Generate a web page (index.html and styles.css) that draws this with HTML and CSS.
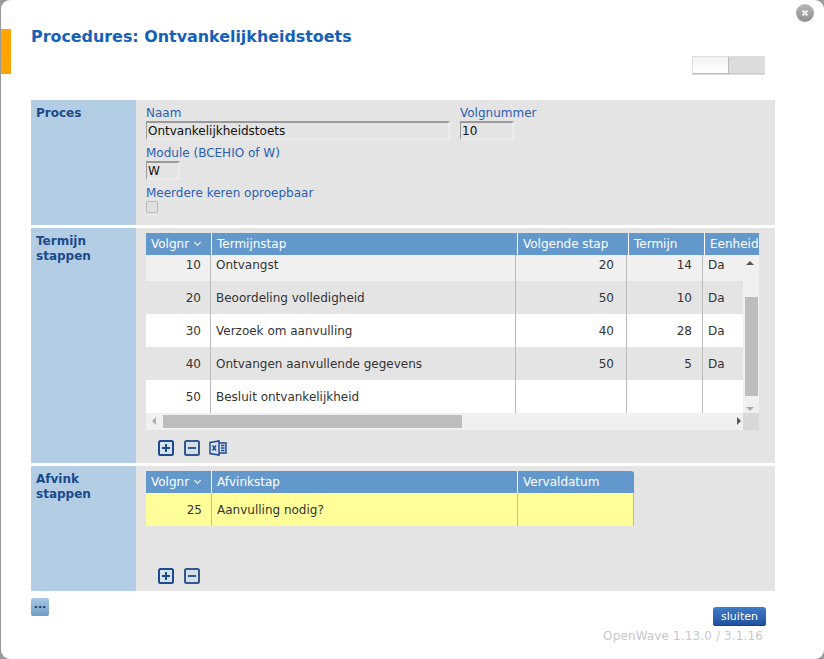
FILE: index.html
```html
<!DOCTYPE html>
<html lang="en">
<head>
	<meta charset="UTF-8">
	<title>Procedures: Ontvankelijkheidstoets</title>
	<link rel="stylesheet" href="styles.css">
</head>
<body>
	<div class="dialog">
		<span class="marker"></span>
		<svg class="close" width="18" height="18" viewBox="0 0 18 18">
			<defs>
				<linearGradient id="closeFill" x1="0" y1="0" x2="0" y2="1">
					<stop offset="0" stop-color="#b8b8b8"/>
					<stop offset="1" stop-color="#8e8e8e"/>
				</linearGradient>
			</defs>
			<circle cx="9" cy="9" r="9" fill="url(#closeFill)"/>
			<path d="M6.500 6.500l5 5M11.500 6.500l-5 5" stroke="#eee" stroke-width="2.200"/>
		</svg>
		<div class="head">
			<h1>Procedures: Ontvankelijkheidstoets</h1>
			<div class="toggle"><span class="toggle-on"></span><span class="toggle-off"></span></div>
		</div>

		<section class="block block-proces">
			<h2>Proces</h2>
			<div class="block-body form">
				<div class="form-row">
					<div class="field">
						<label>Naam</label>
						<div class="input input-naam">Ontvankelijkheidstoets</div>
					</div>
					<div class="field">
						<label>Volgnummer</label>
						<div class="input input-nr">10</div>
					</div>
				</div>
				<div class="field">
					<label>Module (BCEHIO of W)</label>
					<div class="input input-mod">W</div>
				</div>
				<div class="field">
					<label>Meerdere keren oproepbaar</label>
					<span class="check"></span>
				</div>
			</div>
		</section>

		<section class="block block-termijn">
			<h2>Termijn<br>stappen</h2>
			<div class="block-body">
				<div class="grid">
					<div class="grid-head">
						<div class="th th-nr">Volgnr <i class="sort"></i></div>
						<div class="th th-stap">Termijnstap</div>
						<div class="th th-volg">Volgende stap</div>
						<div class="th th-term">Termijn</div>
						<div class="th th-een">Eenheid</div>
					</div>
					<div class="grid-main">
						<div class="grid-rows">
							<div class="tr tr-first"><div class="td td-nr">10</div><div class="td td-stap">Ontvangst</div><div class="td td-volg">20</div><div class="td td-term">14</div><div class="td td-een">Da</div></div>
							<div class="tr tr-grey"><div class="td td-nr">20</div><div class="td td-stap">Beoordeling volledigheid</div><div class="td td-volg">50</div><div class="td td-term">10</div><div class="td td-een">Da</div></div>
							<div class="tr"><div class="td td-nr">30</div><div class="td td-stap">Verzoek om aanvulling</div><div class="td td-volg">40</div><div class="td td-term">28</div><div class="td td-een">Da</div></div>
							<div class="tr tr-grey"><div class="td td-nr">40</div><div class="td td-stap">Ontvangen aanvullende gegevens</div><div class="td td-volg">50</div><div class="td td-term">5</div><div class="td td-een">Da</div></div>
							<div class="tr"><div class="td td-nr">50</div><div class="td td-stap">Besluit ontvankelijkheid</div><div class="td td-volg"></div><div class="td td-term"></div><div class="td td-een"></div></div>
						</div>
						<div class="vbar">
							<i class="arrow arrow-up"></i>
							<span class="vbar-thumb"></span>
							<i class="arrow arrow-down"></i>
						</div>
					</div>
					<div class="hbar">
						<div class="hbar-track">
							<i class="arrow arrow-left"></i>
							<span class="hbar-thumb"></span>
							<i class="arrow arrow-right"></i>
						</div>
						<span class="hbar-corner"></span>
					</div>
				</div>
				<div class="tools">
					<svg width="16" height="16" viewBox="0 0 16 16"><rect x="1" y="1" width="14" height="14" rx="1.500" fill="#d5e2f0" stroke="#1f4a8f" stroke-width="2"/><path d="M8 4v8M4 8h8" stroke="#1f4a8f" stroke-width="2"/></svg>
					<svg width="16" height="16" viewBox="0 0 16 16"><rect x="1" y="1" width="14" height="14" rx="1.500" fill="#d5dde8" stroke="#33588f" stroke-width="2"/><path d="M4 8h8" stroke="#33588f" stroke-width="2"/></svg>
					<svg class="tool-xls" width="18" height="16" viewBox="0 0 18 16"><path d="M1 2.500L10 1v14L1 13.500zM10 3h7v10h-7" fill="#dbe5f1" stroke="#1f4a8f" stroke-width="1.500"/><path d="M3.500 5.500l3.500 5M7 5.500l-3.500 5" stroke="#1f4a8f" stroke-width="1.500"/><path d="M12 5.500h3.500M12 8h3.500M12 10.500h3.500" stroke="#1f4a8f" stroke-width="1.300"/></svg>
				</div>
			</div>
		</section>

		<section class="block block-afvink">
			<h2>Afvink<br>stappen</h2>
			<div class="block-body">
				<div class="grid-small">
					<div class="grid-head">
						<div class="th th-nr">Volgnr <i class="sort"></i></div>
						<div class="th th-afvink">Afvinkstap</div>
						<div class="th th-verval">Vervaldatum</div>
					</div>
					<div class="tr tr-yellow"><div class="td td-nr">25</div><div class="td td-afvink">Aanvulling nodig?</div><div class="td td-verval"></div></div>
				</div>
				<div class="tools tools-bottom">
					<svg width="16" height="16" viewBox="0 0 16 16"><rect x="1" y="1" width="14" height="14" rx="1.500" fill="#d5e2f0" stroke="#1f4a8f" stroke-width="2"/><path d="M8 4v8M4 8h8" stroke="#1f4a8f" stroke-width="2"/></svg>
					<svg width="16" height="16" viewBox="0 0 16 16"><rect x="1" y="1" width="14" height="14" rx="1.500" fill="#d5dde8" stroke="#33588f" stroke-width="2"/><path d="M4 8h8" stroke="#33588f" stroke-width="2"/></svg>
				</div>
			</div>
		</section>

		<div class="foot">
			<button class="more">...</button>
			<div class="foot-right">
				<button class="close-btn">sluiten</button>
				<div class="version">OpenWave 1.13.0 / 3.1.16</div>
			</div>
		</div>
	</div>
</body>
</html>
```

FILE: styles.css
```css
html,body{margin:0;padding:0;}
body{background:#9a9a9a;font:12px/15px "DejaVu Sans",Verdana,sans-serif;color:#333;}
h1,h2{margin:0;}
.dialog{position:relative;box-sizing:border-box;height:659px;margin-left:1px;padding-left:30px;background:#fff;border-radius:9px;overflow:hidden;}
.marker{position:absolute;left:-1px;top:29px;width:11px;height:45px;background:#ffa500;}
.close{position:absolute;left:795px;top:4px;}

.head{position:relative;height:100px;}
.head h1{padding-top:27px;font-size:15.9px;line-height:20px;color:#1560b8;}
.toggle{position:absolute;left:661px;top:56px;display:flex;width:73px;height:19px;box-sizing:border-box;border:1px solid #ddd;}
.toggle-on{width:36px;background:linear-gradient(#f2f2f2,#fff);border-right:1px solid #bbb;border-bottom:1px solid #bbb;box-sizing:border-box;}
.toggle-off{flex:1;background:#dcdcdc;border-bottom:1px solid #ccc;}

.block{display:flex;width:744px;background:#e4e4e4;}
.block h2{box-sizing:border-box;width:105px;flex:none;padding:6px 5px 0;background:#b3cde4;font-size:12px;line-height:15px;color:#1a4a8a;}
.block-body{flex:1;padding:5px 10px 0;}
.block-proces{height:125px;}
.block-termijn{height:235px;margin-top:3px;}
.block-afvink{height:125px;margin-top:3px;}

.form-row{display:flex;gap:10px;}
.field{margin-bottom:6px;}
.field label{display:block;height:14px;line-height:14px;color:#2a5fb0;}
.block-proces .block-body{padding-top:6px;}
.input{box-sizing:border-box;height:19px;margin-top:1px;padding-left:1px;line-height:17px;color:#111;border:2px solid #ebebeb;border-top-color:#999;border-left:1px solid #999;}
.input-naam{width:304px;}
.input-nr{width:54px;}
.input-mod{width:34px;}
.check{display:block;width:12px;height:12px;margin-top:1px;border:1px solid #bbb;border-radius:2px;box-sizing:border-box;background:#e0e0e0;}

.grid{width:613px;background:#f0f0f0;}
.grid-head{display:flex;height:22px;background:#6398cc;color:#fff;}
.th{box-sizing:border-box;padding:0 5px;line-height:22px;border-right:1px solid #fff;white-space:nowrap;overflow:hidden;}
.th-nr{width:66px;}
.th-stap{width:306px;}
.th-volg{width:111px;}
.th-term{width:76px;}
.th-een{width:54px;border-right:0;}
.sort{display:inline-block;width:4px;height:4px;margin:0 0 3px 2px;border:solid #fff;border-width:0 1px 1px 0;transform:rotate(45deg);}

.grid-main{display:flex;}
.grid-rows{width:597px;}
.tr{display:flex;height:33px;background:#fff;}
.tr-first{height:26px;background:#f0f0f0;}
.tr-grey{background:#e4e4e4;}
.td{box-sizing:border-box;padding:1px 4px 0;line-height:33px;border-right:1px solid #bbb;white-space:nowrap;overflow:hidden;}
.tr-first .td{line-height:19px;}
.td-nr{width:65px;padding-right:9px;text-align:right;}
.td-stap{width:305px;padding-left:5px;}
.td-volg{width:111px;padding-right:12px;text-align:right;}
.td-term{width:76px;padding-right:10px;text-align:right;}
.td-een{width:40px;border-right:0;padding-left:5px;}

.vbar{position:relative;width:16px;background:#f0f0f0;}
.vbar-thumb{position:absolute;left:2px;top:42px;width:13px;height:99px;background:#bdbdbd;}
.hbar{display:flex;height:17px;}
.hbar-track{position:relative;flex:1;background:#f0f0f0;}
.hbar-thumb{position:absolute;left:17px;top:2px;width:299px;height:13px;background:#bdbdbd;}
.hbar-corner{width:16px;background:#d8d8d8;}
.arrow{position:absolute;width:0;height:0;border:4px solid transparent;}
.arrow-up{left:3px;top:2px;border-bottom-color:#555;}
.arrow-down{left:3px;bottom:-2px;border-top-color:#aaa;}
.arrow-left{left:2px;top:4px;border-right-color:#aaa;}
.arrow-right{right:-2px;top:4px;border-left-color:#555;}

.tools{display:flex;gap:10px;margin-top:10px;padding-left:12px;}
.tools svg{display:block;}
.tool-xls{margin-left:-1px;}
.tools-bottom{margin-top:42px;}

.grid-small{width:488px;}
.grid-small .grid-head{border-top-right-radius:3px;}
.th-afvink{width:306px;}
.th-verval{flex:1;border-right:0;}
.tr-yellow{background:#ffff99;}
.tr-yellow .td-nr{width:66px;}
.td-afvink{width:306px;padding-left:5px;}
.td-verval{flex:1;}

.foot{display:flex;justify-content:space-between;width:735px;margin-top:7px;}
.more{width:18px;height:18px;padding:0 0 5px;border:0;border-radius:2px;background:linear-gradient(#a8c8e4,#6f9cc4);font:bold 11px/10px "DejaVu Sans",sans-serif;color:#1a3a6a;}
.foot-right{display:flex;flex-direction:column;align-items:flex-end;padding-top:9px;}
.close-btn{width:53px;height:19px;padding:0;border:0;border-radius:3px;background:linear-gradient(#3f7cc8,#1f4f9c);font:11px/17px "DejaVu Sans",sans-serif;color:#fff;box-shadow:inset 0 -1px #1a3f7a;}
.version{margin:3px 3px 0 0;color:#c8c8c8;letter-spacing:.13px;}
```
